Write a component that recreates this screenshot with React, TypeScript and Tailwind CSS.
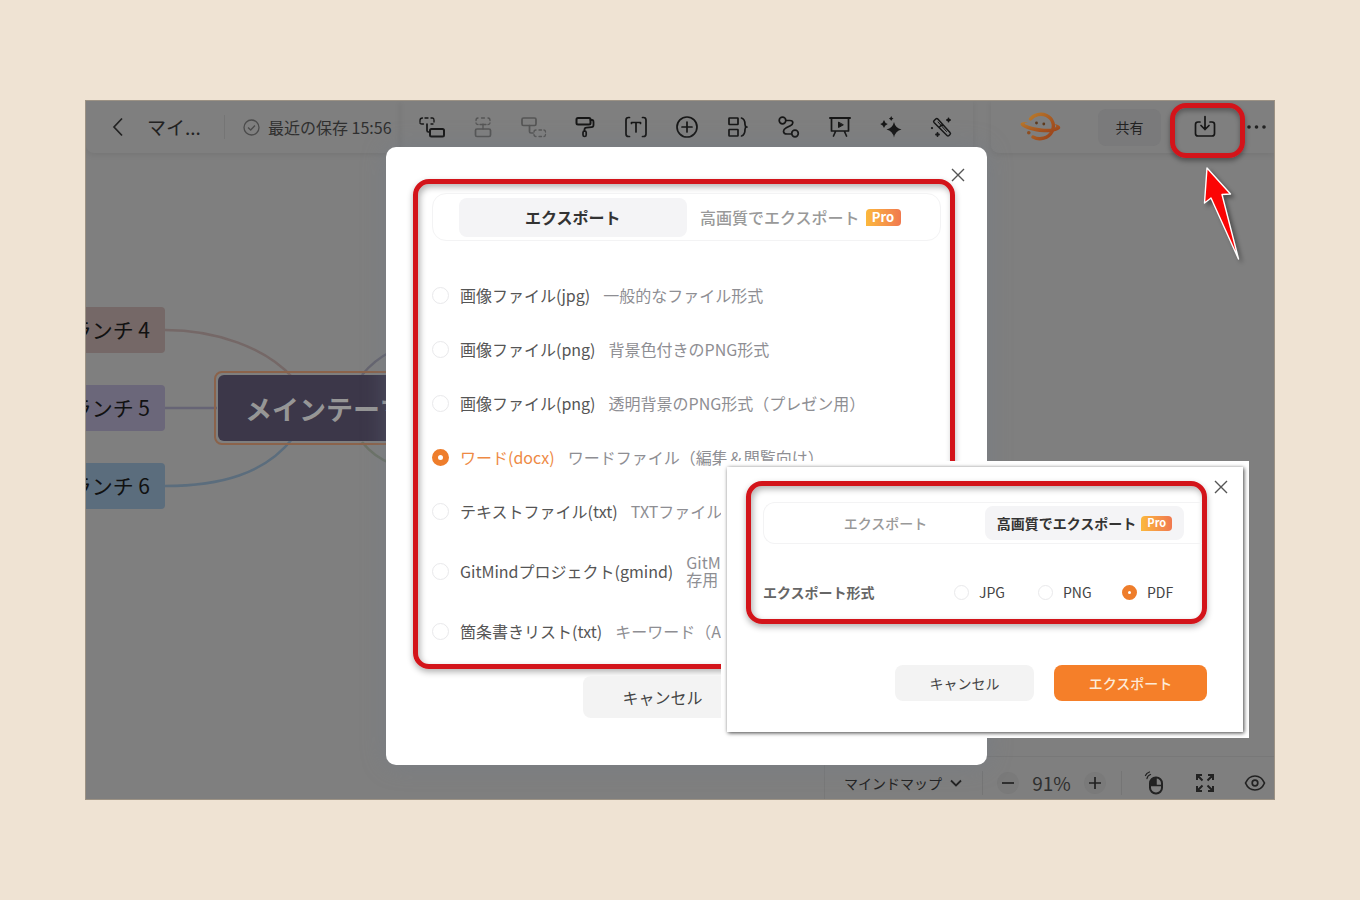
import React, { useState } from "react";

type Format = {
  id: string;
  label: string;
  desc: string;
};

const formats: Format[] = [
  { id: "jpg", label: "画像ファイル(jpg)", desc: "一般的なファイル形式" },
  { id: "png", label: "画像ファイル(png)", desc: "背景色付きのPNG形式" },
  { id: "png-alpha", label: "画像ファイル(png)", desc: "透明背景のPNG形式（プレゼン用）" },
  { id: "docx", label: "ワード(docx)", desc: "ワードファイル（編集＆閲覧向け）" },
  { id: "txt", label: "テキストファイル(txt)", desc: "TXTファイル" },
  { id: "gmind", label: "GitMindプロジェクト(gmind)", desc: "GitM\n存用" },
  { id: "outline", label: "箇条書きリスト(txt)", desc: "キーワード（A" },
];

function Icon({ children, size = 26 }: { children: React.ReactNode; size?: number }) {
  return (
    <svg
      width={size}
      height={size}
      viewBox="0 0 26 26"
      fill="none"
      stroke="currentColor"
      strokeWidth="1.7"
      strokeLinecap="round"
      strokeLinejoin="round"
      aria-hidden="true"
    >
      {children}
    </svg>
  );
}

const tools = [
  {
    name: "親トピック",
    muted: false,
    icon: (
      <>
        <path d="M1 8V6.500Q1 4 3.500 4M6 4h3M12 4h1.500Q15 4 15 6v2M4.500 10H3Q1 10 1 9M12 10h2" strokeWidth="1.300" />
        <path d="M8 10v6.500Q8 18 9.500 18H11" />
        <rect x="11" y="15" width="14" height="7.500" rx="1.500" strokeWidth="2" />
      </>
    ),
  },
  {
    name: "同階層トピック",
    muted: true,
    icon: (
      <>
        <path d="M6 6.500Q6 4 8 4M11.500 4h3M18 4Q20 4 20 6.500M6 9Q6 10.500 8 10.500M18 10.500Q20 10.500 20 9M13 10v5M10 10.500h6" strokeWidth="1.300" />
        <rect x="5.500" y="15" width="15" height="7.500" rx="1.500" />
      </>
    ),
  },
  {
    name: "サブトピック",
    muted: true,
    icon: (
      <>
        <rect x="1" y="4" width="14" height="7.500" rx="1.500" />
        <path d="M8.500 11.500v6Q8.500 19 10 19h2" />
        <path d="M13 18Q13 16 15 16M18 16h2.500M23 16q1.500 0 1.500 2M13 20.500q0 2 2 2M18 22.500h2.500M23 22.500q1.500 0 1.500-2" strokeWidth="1.300" />
      </>
    ),
  },
  {
    name: "書式コピー",
    muted: false,
    icon: (
      <>
        <rect x="4.500" y="4" width="14" height="6.500" rx="1.500" strokeWidth="2" />
        <path d="M18.500 6h1.500q1.500 0 1.500 2v3q0 2-2 2.200l-5 .4q-2 .2-2 2v1.400" strokeWidth="1.800" />
        <rect x="11" y="17" width="3.200" height="5.500" rx="1.600" />
      </>
    ),
  },
  {
    name: "概要",
    muted: false,
    icon: (
      <>
        <path d="M6.500 3.500h-1Q3 3.500 3 6v14q0 2.500 2.500 2.500h1M19.500 3.500h1Q23 3.500 23 6v14q0 2.500-2.500 2.500h-1" />
        <path d="M8.500 9.500v-1h9v1M13 8.500v9.500" />
      </>
    ),
  },
  {
    name: "挿入",
    muted: false,
    icon: (
      <>
        <circle cx="13" cy="13" r="10" />
        <path d="M13 8v10M8 13h10" />
      </>
    ),
  },
  {
    name: "要約",
    muted: false,
    icon: (
      <>
        <rect x="4" y="4" width="9" height="6.500" rx=".5" />
        <rect x="4" y="15.500" width="9" height="6.500" rx=".5" />
        <path d="M16.500 4q3.500 1 3.500 6.500 0 2 1.500 2.500-1.500.5-1.500 2.500 0 5.500-3.500 6.500M20.500 13H22" />
      </>
    ),
  },
  {
    name: "関連線",
    muted: false,
    icon: (
      <>
        <circle cx="6.500" cy="6.500" r="3.300" />
        <circle cx="19" cy="19.500" r="3.300" />
        <path d="M9.800 6.500h4q3 0 3 2.200 0 1.800-2.500 3l-4 2q-2.800 1.500-2.800 3.500 0 2.800 3.500 2.800h4.500" />
      </>
    ),
  },
  {
    name: "プレゼンテーション",
    muted: false,
    icon: (
      <>
        <path d="M3 4h20" strokeWidth="2" />
        <path d="M4.500 4.500v12.500h17V4.500M8.500 17.500L6.500 22M17.500 17.500l2 4.500" />
        <path d="M11.500 8.500v5l4.500-2.500z" fill="currentColor" strokeWidth="1" />
      </>
    ),
  },
  {
    name: "AI生成",
    muted: false,
    icon: (
      <g fill="currentColor" stroke="none">
        <path d="M16 8q1.300 6 7.500 7.500Q17.300 17 16 23.500 14.700 17 8.500 15.500 14.700 14 16 8z" />
        <path d="M6 6q.8 3.200 3.800 4Q6.800 10.800 6 14q-.8-3.200-3.800-4Q5.200 9.200 6 6z" />
        <path d="M13.200 2q.5 2 2.300 2.500-1.800.5-2.300 2.500-.5-2-2.300-2.500 1.800-.5 2.300-2.500z" />
      </g>
    ),
  },
  {
    name: "スタイル",
    muted: false,
    icon: (
      <>
        <path d="M5 6.800L6.800 5q1-1 2 0L21 18.500q1 1 0 2l-1 1q-1 1-2 0L5 8.500q-.8-.9 0-1.700zM10.500 13l3-3" strokeWidth="1.500" />
        <path d="M9 8l8.500 9.500" strokeWidth="1" />
        <path d="M19.500 4.500v3M18 6h3M8.500 19v3M7 20.500h3" strokeWidth="1.800" />
        <path d="M3 14v.1" strokeWidth="2.200" />
      </>
    ),
  },
];

const branches = [
  { text: "ブランチ 4", color: "bg-[#756867]" },
  { text: "ブランチ 5", color: "bg-[#6b677a]" },
  { text: "ブランチ 6", color: "bg-[#5b6d7d]" },
];

function Logo() {
  return (
    <svg width="42" height="30" viewBox="0 0 42 30" fill="none" strokeLinecap="round" aria-hidden="true">
      <defs>
        <linearGradient id="logo" x1="0" y1="0" x2="1" y2="1">
          <stop offset="0" stopColor="#b8792c" />
          <stop offset="1" stopColor="#99401a" />
        </linearGradient>
      </defs>
      <path d="M10.500 7C14 2.500 21 .8 26.500 3.500c6.500 3.200 8.500 10 5.500 16-3.500 7-12.500 9-19 5.500" stroke="url(#logo)" strokeWidth="3.400" />
      <path
        d="M8 10.200C3 9.800.3 10.800.5 12.200.9 15 12 20 24 20.200c8.500.2 16-2 16.300-4.500.2-1.800-2-3-6.300-4 2 1.300 3 2.500 1.500 3.500-2.500 1.800-8 2-13.500 1.200C14 15.500 5 13.200 4.500 11.500c-.2-.6 1.500-.9 3.500-1.300z"
        fill="url(#logo)"
      />
      <circle cx="16.500" cy="11" r="1.400" fill="#5f3a1c" />
      <circle cx="23.800" cy="12" r="1.400" fill="#5f3a1c" />
      <circle cx="8.800" cy="20.800" r="1.800" fill="#8f4e20" />
    </svg>
  );
}

function ProBadge({ small = false }: { small?: boolean }) {
  return (
    <span
      className={
        "flex items-center justify-center rounded-[4px] rounded-bl-none bg-gradient-to-r from-[#fbb83c] to-[#f0784e] font-bold text-white " +
        (small ? "h-[15px] w-[31px] text-[11px]" : "h-[17px] w-[35px] text-[13px]")
      }
    >
      Pro
    </span>
  );
}

function CloseButton({ className }: { className: string }) {
  return (
    <button type="button" aria-label="閉じる" className={"absolute size-4 text-[#555] " + className}>
      <svg viewBox="0 0 16 16" fill="none" stroke="currentColor" strokeWidth="1.400" aria-hidden="true">
        <path d="M2 2l12 12M14 2L2 14" />
      </svg>
    </button>
  );
}

function Radio(props: { name: string; checked: boolean; onChange: () => void; size: string }) {
  const state = props.checked ? "border-[#ee7d2b]" : "border-[#e9e9eb]";
  return (
    <input
      type="radio"
      name={props.name}
      checked={props.checked}
      onChange={props.onChange}
      className={
        "shrink-0 appearance-none rounded-full bg-white " +
        props.size +
        " " +
        state +
        (props.checked ? " border-[6px]" : " border")
      }
    />
  );
}

function TopBar() {
  return (
    <header className="flex h-[52px] shrink-0 justify-between text-[#222]">
      <div className="flex w-[314px] items-center rounded-b-lg pl-[23px] shadow-[0_2px_6px_rgba(0,0,0,0.08)]">
        <button type="button" aria-label="戻る" className="w-[38px]">
          <svg width="16" height="20" viewBox="0 0 16 20" fill="none" stroke="currentColor" strokeWidth="1.700" aria-hidden="true">
            <path d="M13 1.500L5 10l8 8.500" />
          </svg>
        </button>
        <span className="w-[77px] text-[19px]">マイ...</span>
        <span className="h-6 w-px bg-[#757575]" />
        <span className="flex items-center gap-2 whitespace-nowrap pl-[18px] text-[#2f2f2f]">
          <svg width="17" height="17" viewBox="0 0 17 17" fill="none" stroke="#4c4c4c" strokeWidth="1.300" aria-hidden="true">
            <circle cx="8.500" cy="8.500" r="7.500" />
            <path d="M5 8.500l2.700 2.500L12 6.500" />
          </svg>
          最近の保存 15:56
        </span>
      </div>
      <nav className="flex items-center rounded-b-lg px-[6px] shadow-[0_2px_6px_rgba(0,0,0,0.08)]">
        {tools.map((t) => (
          <button
            key={t.name}
            type="button"
            aria-label={t.name}
            className={"flex w-[51px] justify-center " + (t.muted ? "text-[#555]" : "text-[#161616]")}
          >
            <Icon>{t.icon}</Icon>
          </button>
        ))}
      </nav>
      <div className="ml-[18px] flex w-[283px] items-center rounded-bl-lg pl-[29px] shadow-[0_2px_6px_rgba(0,0,0,0.08)]">
        <Logo />
        <button type="button" className="ml-9 h-[37px] w-[63px] rounded-lg bg-[#7a7a7b] text-sm">
          共有
        </button>
        <button type="button" aria-label="エクスポート" className="relative ml-[31px] text-[#161616]">
          <Icon>
            <path d="M8 8H6Q3.500 8 3.500 10.500v9Q3.500 22 6 22h14q2.500 0 2.500-2.500v-9Q22.500 8 20 8h-2M13 2.500v13M9 11.500l4 4 4-4" />
          </Icon>
          <span className="absolute -left-[22px] -top-[11px] h-[55px] w-[75px] rounded-[16px] border-[5px] border-[#d3141a] shadow-[0_3px_5px_rgba(0,0,0,0.35),inset_0_3px_5px_rgba(0,0,0,0.3)]" />
        </button>
        <button type="button" aria-label="メニュー" className="ml-[26px]">
          <svg width="24" height="6" viewBox="0 0 24 6" fill="currentColor" aria-hidden="true">
            <circle cx="5" cy="3" r="1.800" />
            <circle cx="12.500" cy="3" r="1.800" />
            <circle cx="20" cy="3" r="1.800" />
          </svg>
        </button>
      </div>
    </header>
  );
}

function MindMap() {
  return (
    <main className="relative flex-1">
      <svg className="absolute inset-0 h-full w-full" fill="none" strokeWidth="2.500" aria-hidden="true">
        <path d="M79 177c50 0 100 17 128 48" stroke="#756867" />
        <path d="M79 255h52" stroke="#666475" />
        <path d="M79 333c55 0 100-12 128-48" stroke="#5b6d7d" />
        <path d="M276 222q12-15 30-24" stroke="#65646f" />
        <path d="M276 289q12 15 30 22" stroke="#6c7267" />
      </svg>
      <div className="absolute -left-[49px] top-[154px] flex flex-col gap-8">
        {branches.map((b) => (
          <div
            key={b.text}
            className={"flex h-[46px] w-32 items-center justify-end whitespace-nowrap rounded-[4px] pr-[15px] text-[21px] text-[#111] " + b.color}
          >
            {b.text}
          </div>
        ))}
      </div>
      <div className="absolute left-[128px] top-[218px] rounded-lg border-2 border-[#8b634b] p-[2px]">
        <div className="flex h-[66px] items-center whitespace-nowrap rounded-[6px] bg-[#3c3749] px-[27px] pt-[2px] text-[27px] font-bold text-[#969696]">
          メインテーマ
        </div>
      </div>
    </main>
  );
}

function BottomBar() {
  return (
    <footer className="flex h-[43px] shrink-0 justify-end text-[#222]">
      <div className="flex w-[450px] items-center border-l border-t border-[#787878] pl-[19px] pt-[10px]">
        <button type="button" className="flex w-[138px] items-center gap-2 text-sm">
          マインドマップ
          <svg width="12" height="8" viewBox="0 0 12 8" fill="none" stroke="currentColor" strokeWidth="1.800" aria-hidden="true">
            <path d="M1 1.500l5 5 5-5" />
          </svg>
        </button>
        <span className="h-6 w-px bg-[#757575]" />
        <button type="button" aria-label="縮小" className="ml-[14px] flex size-[22px] items-center justify-center rounded-full bg-[#7a7a7a]">
          <svg width="14" height="14" viewBox="0 0 14 14" stroke="currentColor" strokeWidth="1.700" aria-hidden="true">
            <path d="M1 7h12" />
          </svg>
        </button>
        <span className="w-[65px] text-center text-[19px] text-[#2f2f2f]">91%</span>
        <button type="button" aria-label="拡大" className="flex size-[22px] items-center justify-center rounded-full bg-[#7a7a7a]">
          <svg width="14" height="14" viewBox="0 0 14 14" stroke="currentColor" strokeWidth="1.700" aria-hidden="true">
            <path d="M1 7h12M7 1v12" />
          </svg>
        </button>
        <span className="ml-[15px] h-6 w-px bg-[#757575]" />
        <button type="button" aria-label="マウス操作" className="ml-5">
          <Icon>
            <rect x="8" y="7.500" width="12" height="16" rx="5.800" strokeWidth="2" />
            <path d="M13.500 8v7.500H8.500v-3q0-4 5-4.500z" fill="currentColor" strokeWidth="1" />
            <path d="M8.500 15.500H20M14 8v7" strokeWidth="1.500" />
            <path d="M5 8.500q.5-3 3.500-4M3.500 5.500Q4.500 3 7.500 2" strokeWidth="1.300" />
          </Icon>
        </button>
        <button type="button" aria-label="全画面" className="ml-6">
          <Icon>
            <g strokeWidth="2" strokeLinecap="butt" strokeLinejoin="miter">
              <path d="M5 10V5h5M5 5l5.500 5.500M16 5h5v5M21 5l-5.500 5.500M5 16v5h5M5 21l5.500-5.500M21 16v5h-5M21 21l-5.500-5.500" />
            </g>
          </Icon>
        </button>
        <button type="button" aria-label="表示" className="ml-6">
          <Icon>
            <path d="M3.500 13Q6.500 6 13 6t9.500 7q-3 7-9.500 7t-9.500-7z" />
            <circle cx="13" cy="13" r="2.800" />
          </Icon>
        </button>
      </div>
    </footer>
  );
}

function ExportDialog() {
  const [selected, setSelected] = useState("docx");

  return (
    <section
      role="dialog"
      aria-label="エクスポート"
      className="absolute left-[300px] top-[46px] w-[601px] rounded-[10px] bg-white pb-[47px] pl-[27px] pr-8 pt-8 shadow-[0_0_24px_rgba(110,122,140,0.4)]"
    >
      <div className="rounded-[16px] border-[5px] border-[#d3141a] pb-[21px] pl-[14px] pr-[9px] pt-[9px] shadow-[0_3px_6px_rgba(0,0,0,0.3),inset_2px_3px_6px_rgba(0,0,0,0.3)]">
        <div role="tablist" className="grid h-12 grid-cols-2 items-center rounded-[14px] border border-[#f3f3f4] px-[26px]">
          <button type="button" role="tab" aria-selected="true" className="h-[39px] rounded-lg bg-[#f4f4f6] font-bold text-[#333]">
            エクスポート
          </button>
          <button
            type="button"
            role="tab"
            aria-selected="false"
            className="flex h-[39px] items-center justify-center gap-[6px] whitespace-nowrap font-medium text-[#999]"
          >
            高画質でエクスポート
            <ProBadge />
          </button>
        </div>
        <div className="mt-[42px] flex flex-col gap-[30px]">
          {formats.map((f) => (
            <label key={f.id} className={"flex items-center " + (f.id === "gmind" ? "h-9" : "h-6")}>
              <Radio name="format" size="size-[17px]" checked={selected === f.id} onChange={() => setSelected(f.id)} />
              <span className={"ml-[11px] shrink-0 " + (selected === f.id ? "text-[#ee8a45]" : "text-[#555]")}>
                {f.label}
              </span>
              <span className="ml-[13px] whitespace-pre-line leading-[17px] text-[#8e8e93]">{f.desc}</span>
            </label>
          ))}
        </div>
      </div>
      <button type="button" className="ml-[170px] mt-[7px] h-[42px] w-[159px] rounded-lg bg-[#f3f3f3] text-[#444]">
        キャンセル
      </button>
      <CloseButton className="right-[21px] top-5" />
    </section>
  );
}

function HighQualityDialog() {
  const [type, setType] = useState("PDF");

  return (
    <section role="dialog" aria-label="高画質でエクスポート" className="absolute left-[635px] top-[360px] w-[528px] bg-white p-[6px]">
      <div className="relative bg-white pb-[31px] pl-[19px] pr-9 pt-[14px] shadow-[1px_1px_4px_rgba(0,0,0,0.75)]">
        <div className="rounded-[16px] border-[5px] border-[#d3141a] pb-[15px] pl-3 pt-4 shadow-[0_3px_6px_rgba(0,0,0,0.3),inset_2px_3px_6px_rgba(0,0,0,0.3)]">
          <div
            role="tablist"
            className="grid h-[42px] grid-cols-2 items-center rounded-l-[12px] border border-r-0 border-[#f3f3f4] pl-[22px] pr-[18px]"
          >
            <button type="button" role="tab" aria-selected="false" className="h-[34px] text-sm font-medium text-[#999]">
              エクスポート
            </button>
            <button
              type="button"
              role="tab"
              aria-selected="true"
              className="flex h-[34px] items-center justify-center gap-[5px] whitespace-nowrap rounded-lg bg-[#f4f4f6] text-sm font-bold text-[#333]"
            >
              高画質でエクスポート
              <ProBadge small />
            </button>
          </div>
          <div className="mt-9 flex h-6 items-center text-sm">
            <span className="w-[191px] shrink-0 font-bold text-[#666]">エクスポート形式</span>
            {["JPG", "PNG", "PDF"].map((t) => (
              <label key={t} className="flex w-[84px] shrink-0 items-center gap-[10px] text-[#444]">
                <Radio name="type" size="size-[15px]" checked={type === t} onChange={() => setType(t)} />
                {t}
              </label>
            ))}
          </div>
        </div>
        <div className="mt-[41px] flex justify-end gap-5 text-sm">
          <button type="button" className="h-9 w-[139px] rounded-lg bg-[#f3f3f3] text-[#444]">
            キャンセル
          </button>
          <button type="button" className="h-9 w-[153px] rounded-lg bg-[#f57f29] font-medium text-[#fdebd8]">
            エクスポート
          </button>
        </div>
        <CloseButton className="right-[14px] top-3" />
      </div>
    </section>
  );
}

export default function App() {
  return (
    <div className="flex min-h-screen bg-[#efe3d3] px-[85px] py-[100px] font-['Noto_Sans_CJK_JP','Noto_Sans',sans-serif] text-base">
      <div className="relative flex flex-1 flex-col overflow-hidden border border-[#9c9284] bg-[#7f7f7f]">
        <TopBar />
        <MindMap />
        <BottomBar />
        <ExportDialog />
        <HighQualityDialog />
        {/* arrow pointing at the export button */}
        <svg
          className="absolute right-[28px] top-[64px] drop-shadow-[3px_3px_2px_rgba(0,0,0,0.4)]"
          width="44"
          height="100"
          viewBox="0 0 44 100"
          fill="#fb0505"
          stroke="#fff"
          strokeWidth="1.400"
          strokeLinejoin="round"
          aria-hidden="true"
        >
          <path d="M5 3l23.500 26-8.500.5L36.500 94 9 33l-6.500 5z" />
        </svg>
      </div>
    </div>
  );
}
